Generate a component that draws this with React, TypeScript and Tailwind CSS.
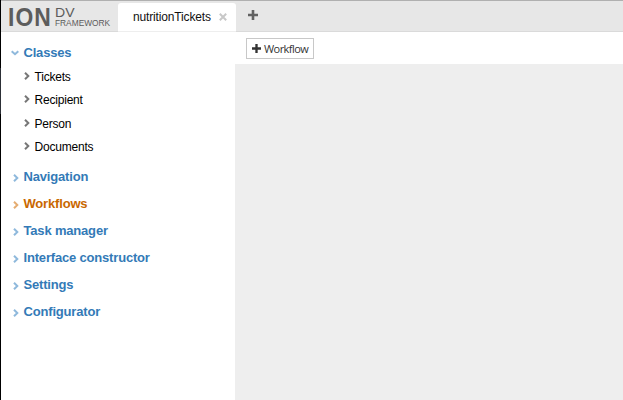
const FONT = "font-['Liberation_Sans',Arial,sans-serif]";

function Chevron({ className, down = false }: { className: string; down?: boolean }) {
  return (
    <svg viewBox="0 0 8 8" className={`h-2 w-2 shrink-0 ${className}`} fill="none" stroke="currentColor" strokeWidth="2">
      <path d={down ? 'M0.7 2.2 L4 5.2 L7.3 2.2' : 'M2 0.8 L5.3 4 L2 7.2'} />
    </svg>
  );
}

function Plus({ className }: { className: string }) {
  return (
    <svg viewBox="0 0 10 10" className={className} fill="currentColor">
      <path d="M3.7 0h2.6v3.7H10v2.6H6.3V10H3.7V6.3H0V3.7h3.7z" />
    </svg>
  );
}

const classItems = ['Tickets', 'Recipient', 'Person', 'Documents'];
const sections = ['Navigation', 'Workflows', 'Task manager', 'Interface constructor', 'Settings', 'Configurator'];

function Logo() {
  return (
    <div className="flex w-[117px] shrink-0 pl-[7px] text-[#5c5c5c]">
      <div className="w-[47px] pt-0.5">
        <div className="w-max origin-left scale-x-[0.88] text-[26px] leading-[28px] font-bold tracking-[1.2px]">ION</div>
      </div>
      <div className="pt-[6px]">
        <div className="w-max origin-left scale-x-[1.08] text-[13px] leading-[12px]">DV</div>
        <div className="w-max origin-left scale-x-[0.96] text-[8.7px] leading-[9px]">FRAMEWORK</div>
      </div>
    </div>
  );
}

export default function App() {
  return (
    <div className={`flex h-[400px] w-[623px] overflow-hidden bg-white ${FONT}`}>
      <div className="flex w-px shrink-0 flex-col bg-black pt-[68px]">
        <div className="h-[46px] bg-[#2c2f36]" />
      </div>
      <div className="flex min-w-0 flex-1 flex-col">
        <header className="flex h-8 shrink-0 border-t border-b border-t-[#b0b0b0] border-b-[#dadada] bg-[#e7e7e7]">
          <Logo />
          <div className="mt-[2px] -mb-px flex w-[118px] shrink-0 items-center rounded-t-[3px] border-b border-[#eeeeee] bg-white pl-[15px]">
            <span className="w-[78px] text-[12px] leading-[16px] tracking-[-0.15px] text-[#111]">nutritionTickets</span>
            <svg viewBox="0 0 8 8" className="ml-2 h-2 w-2 shrink-0 text-[#c8c8c8]" fill="none" stroke="currentColor" strokeWidth="2">
              <path d="M0.8 0.8 L7.2 7.2 M7.2 0.8 L0.8 7.2" />
            </svg>
          </div>
          <Plus className="mt-[9px] ml-[11.5px] h-[10px] w-[10px] text-[#626262]" />
        </header>
        <div className="flex min-h-0 flex-1">
          <nav className="w-[234px] shrink-0 pt-[7px] text-[#337ab7]">
            <div className="flex h-[27px] items-center pl-[10px]">
              <Chevron down className="text-[#8fb9dc]" />
              <span className="ml-[4.5px] text-[13px] font-bold tracking-[-0.2px]">Classes</span>
            </div>
            <ul className="-mt-[0.6px] text-black">
              {classItems.map((item) => (
                <li key={item} className="flex h-[23.3px] items-center pl-[22px]">
                  <Chevron className="-mt-0.5 text-[#777]" />
                  <span className="ml-[3.5px] text-[12px] tracking-[-0.2px]">{item}</span>
                </li>
              ))}
            </ul>
            <ul className="mt-[4.6px]">
              {sections.map((item) => (
                <li key={item} className={`flex h-[27px] items-center pl-[11px] ${item === 'Workflows' ? 'text-[#c96800]' : ''}`}>
                  <Chevron className={`mt-0.5 ${item === 'Workflows' ? 'text-[#e5ad72]' : 'text-[#8fb9dc]'}`} />
                  <span className="ml-[3.5px] text-[13px] font-bold tracking-[-0.18px]">{item}</span>
                </li>
              ))}
            </ul>
          </nav>
          <main className="flex min-w-0 flex-1 flex-col">
            <div className="h-8 shrink-0 pt-[6px] pl-[11px]">
              <button className="flex h-[21px] w-[68px] items-center border border-[#c8c8c8] bg-white pl-[5px] text-[#333]">
                <Plus className="h-[9px] w-[9px] shrink-0" />
                <span className="ml-[3px] font-['Open_Sans',sans-serif] text-[11px] leading-[16px] tracking-[-0.55px]">Workflow</span>
              </button>
            </div>
            <div className="flex-1 bg-[#eeeeee]" />
          </main>
        </div>
      </div>
    </div>
  );
}
